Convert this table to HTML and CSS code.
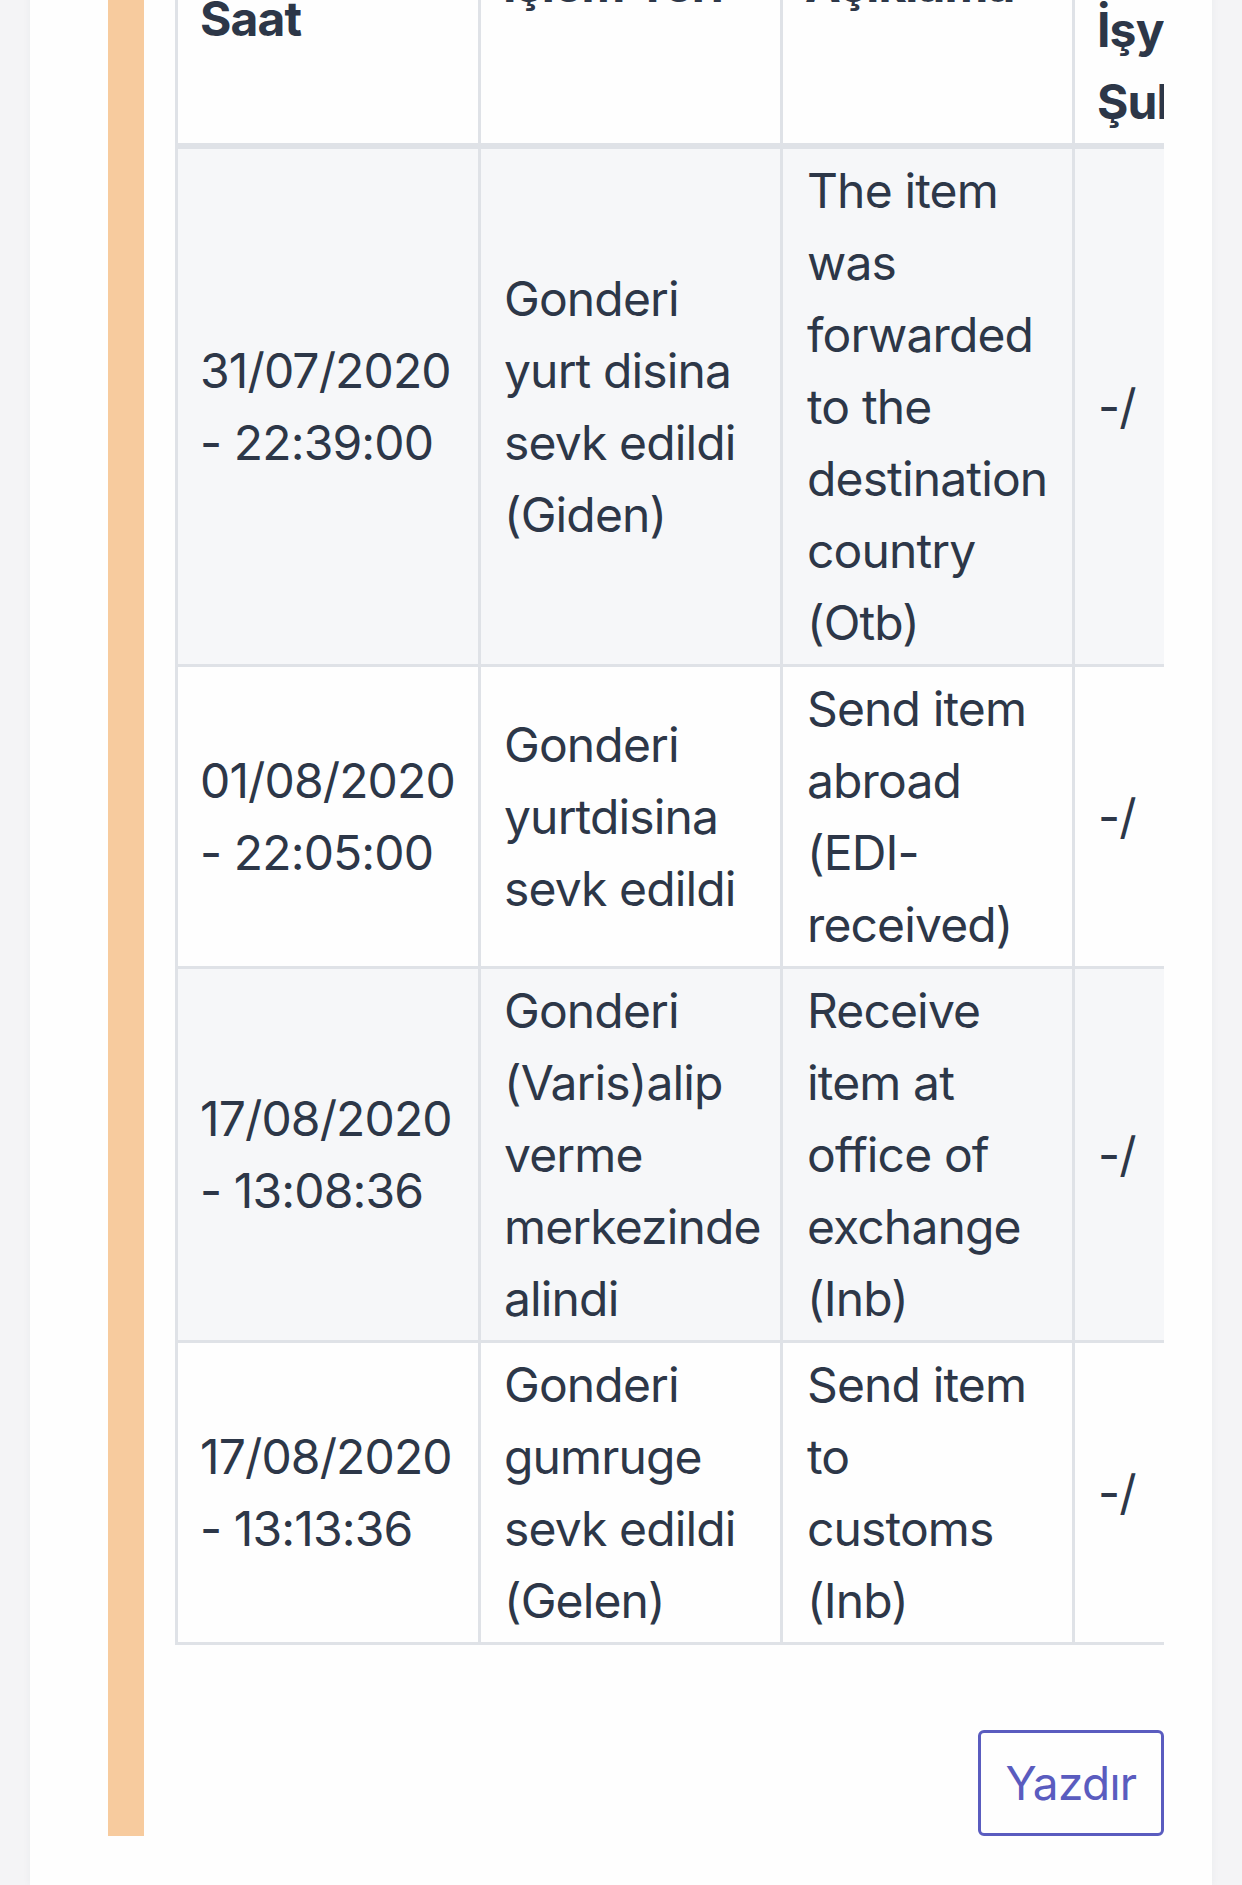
FILE: index.html
```html
<!DOCTYPE html>
<html lang="tr">
<head>
<meta charset="utf-8">
<title>Gönderi Takip</title>
<link rel="stylesheet" href="styles.css">
</head>
<body>
<main class="card">
  <section class="track">
    <div class="table-wrap">
      <table class="events">
        <thead>
          <tr>
            <th class="c-date h-date">Tarihi / Saat</th>
            <th class="c-place h-low">İşlem Yeri</th>
            <th class="c-desc h-low">Açıklama</th>
            <th class="c-branch h-branch">İşyeri Şube</th>
          </tr>
        </thead>
        <tbody>
          <tr>
            <td>31/07/2020 - 22:39:00</td>
            <td>Gonderi yurt disina sevk edildi (Giden)</td>
            <td>The item was forwarded to the destination country (Otb)</td>
            <td>-/</td>
          </tr>
          <tr>
            <td>01/08/2020 - 22:05:00</td>
            <td>Gonderi yurtdisina sevk edildi</td>
            <td>Send item abroad (EDI-received)</td>
            <td>-/</td>
          </tr>
          <tr>
            <td>17/08/2020 - 13:08:36</td>
            <td>Gonderi (Varis)alip verme merkezinde alindi</td>
            <td>Receive item at office of exchange (Inb)</td>
            <td>-/</td>
          </tr>
          <tr>
            <td>17/08/2020 - 13:13:36</td>
            <td>Gonderi gumruge sevk edildi (Gelen)</td>
            <td>Send item to customs (Inb)</td>
            <td>-/</td>
          </tr>
        </tbody>
      </table>
    </div>
    <div class="actions">
      <button class="btn-print" type="button">Yazdır</button>
    </div>
  </section>
</main>
</body>
</html>
```
FILE: styles.css
```css
html, body {
  margin: 0;
  padding: 0;
}

body {
  background: #f4f4f6;
  font-family: Inter, "Noto Sans", sans-serif;
  color: #2d3748;
  overflow: hidden;
}

.card {
  background: #fefefe;
  margin: 0 30px;
  padding: 0 48px 0 78px;
  min-height: 1980px;
  box-sizing: border-box;
  box-shadow: 0 0 8px rgba(40, 50, 70, 0.05);
}

.track {
  margin-top: -95px;
  border-left: 36px solid #f7cb9e;
  padding-left: 31px;
}

.table-wrap {
  overflow: hidden;
}

.events {
  border-collapse: separate;
  border-spacing: 0;
  table-layout: fixed;
  width: 1140px;
  border-left: 3px solid #dfe2e7;
  font-size: 48px;
  line-height: 72px;
  letter-spacing: -0.018em;
}

.events th,
.events td {
  box-sizing: border-box;
  padding: 6px 24px 5px 22px;
  border-right: 3px solid #dfe2e7;
  border-bottom: 3px solid #dfe2e7;
  text-align: left;
  vertical-align: middle;
}

.events th {
  background: #fefefe;
  font-weight: 700;
  vertical-align: bottom;
  border-bottom-width: 6px;
}

.c-date { width: 303px; }
.c-place { width: 302px; }
.c-desc { width: 292px; }
.c-branch { width: 240px; }

.events th.h-date { padding-bottom: 88px; }
.events th.h-low { padding-bottom: 122px; }
.events th.h-branch { padding-bottom: 5px; }

.events td:nth-child(2),
.events td:nth-child(4) {
  padding-left: 23px;
}

.events td:nth-child(3) {
  padding-left: 24px;
  padding-right: 28px;
}

.events tbody tr:nth-child(odd) td {
  background: #f6f7f9;
}

.events tbody tr:nth-child(even) td {
  background: #fefefe;
}

.actions {
  display: flex;
  justify-content: flex-end;
  padding-top: 85px;
}

.btn-print {
  font-family: Inter, "Noto Sans", sans-serif;
  font-size: 46px;
  letter-spacing: -0.015em;
  line-height: 100px;
  height: 106px;
  width: 186px;
  padding: 0;
  color: #5a5cbf;
  background: #fefefe;
  border: 3px solid #5a5cbf;
  border-radius: 6px;
  text-align: center;
}
```
